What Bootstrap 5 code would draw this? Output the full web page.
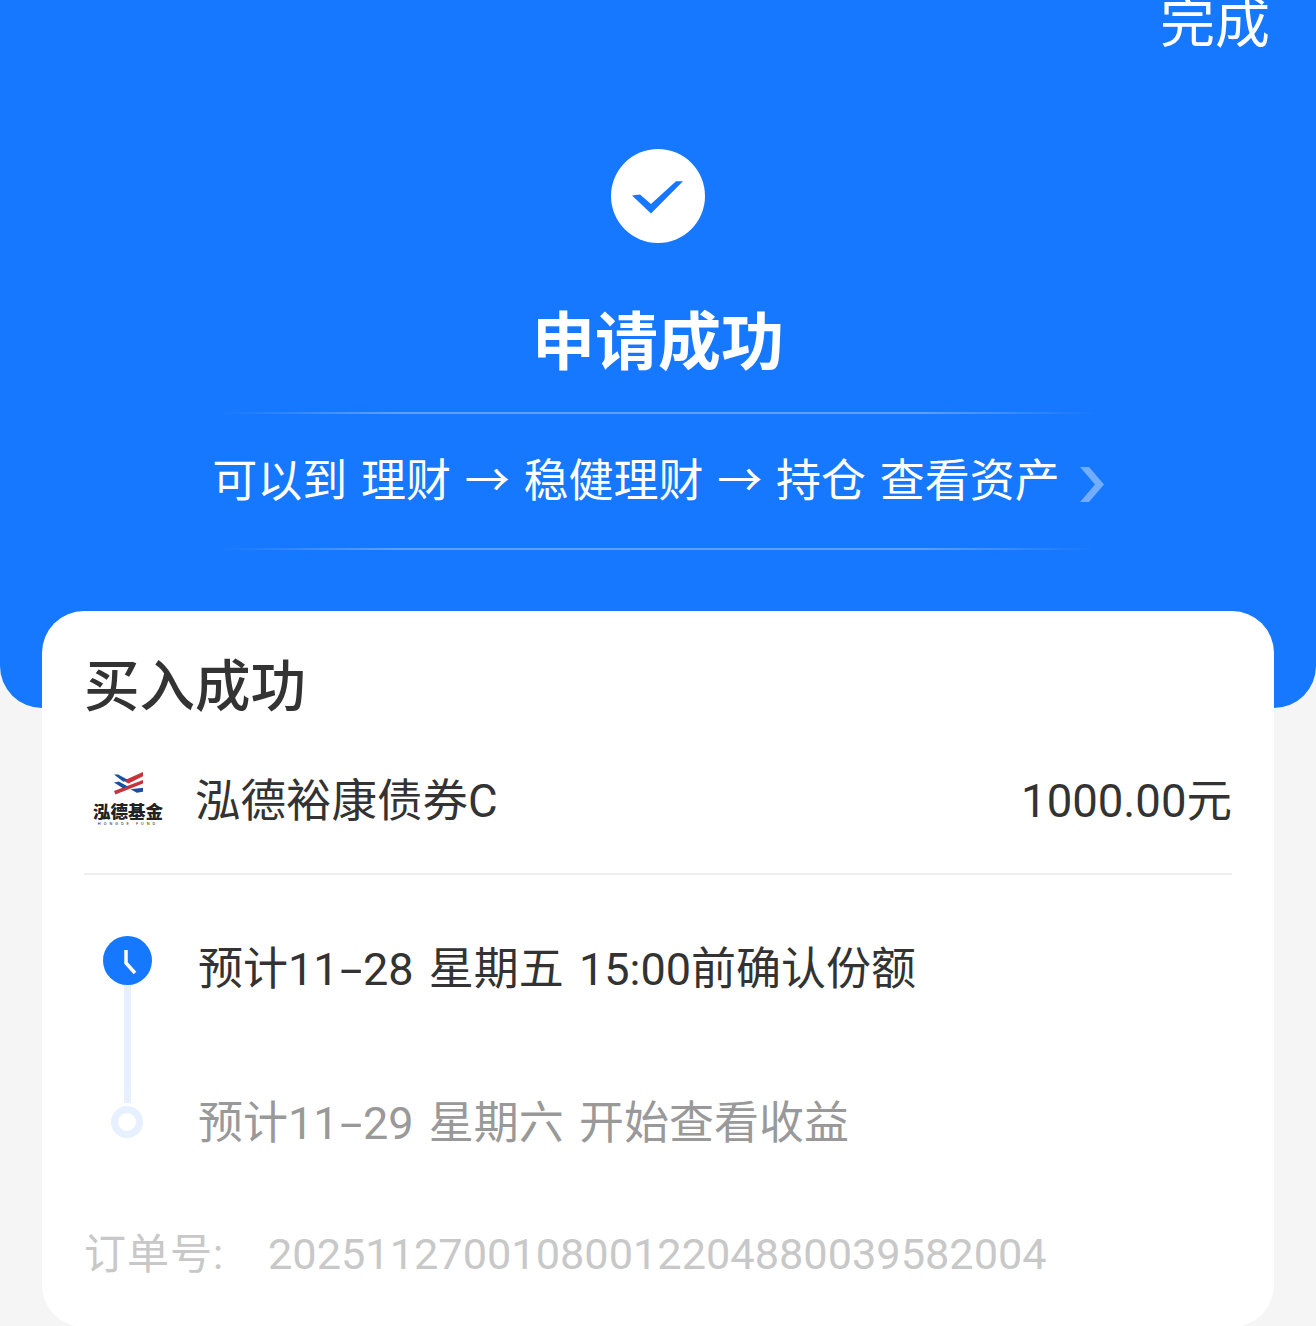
<!DOCTYPE html>
<html lang="zh">
<head>
<meta charset="UTF-8" />
<title>申请成功</title>
<link href="https://cdn.jsdelivr.net/npm/bootstrap@5.3.0/dist/css/bootstrap.min.css" rel="stylesheet" />
<style>
html, body { height: 1326px; overflow: hidden; }
body { background: #f5f5f5; font-family: Roboto, "Noto Sans CJK SC", sans-serif; }
.hero { height: 708px; background: #1677ff; border-radius: 0 0 42px 42px; color: #fff; }
.done-link { font-size: 55px; line-height: 46px; height: 149px; padding-right: 46px; }
.ok-circle { width: 94px; height: 94px; background: #fff; border-radius: 50%; }
.ok-check { margin-top: 2px; }
.hero-title { font-size: 63px; font-weight: 700; line-height: 72px; margin: 64px 0 33px; }
.hero-rule { width: 878px; height: 2px; background: linear-gradient(90deg, rgba(255,255,255,0), rgba(255,255,255,.3) 20%, rgba(255,255,255,.3) 80%, rgba(255,255,255,0)); }
.hero-path { font-size: 45px; line-height: 54px; height: 134px; padding-top: 2px; word-spacing: 2.6px; gap: 20px; }
.path-chevron { margin-top: 6px; }
.sheet { margin: -97px 42px 0; position: relative; height: 716px; background: #fff; border-radius: 42px; padding: 0 42px; }
.sheet-title { font-size: 55.5px; font-weight: 500; line-height: 64px; color: #333; padding-top: 45px; height: 110px; }
.fund-row { height: 154px; padding-top: 11px; border-bottom: 2px solid #eeeeee; }
.fund-name, .fund-amount { font-size: 45.5px; color: #333; }
.fund-logo { width: 72px; margin: -7px 31px 0 8px; }
.logo-icon { margin-bottom: 8px; }
.logo-cn { font-size: 17.5px; font-weight: 900; line-height: 18px; color: #222; white-space: nowrap; }
.logo-en { font-size: 4px; line-height: 5px; letter-spacing: 3px; color: #222; white-space: nowrap; }
.steps { padding-top: 61px; }
.step-row { height: 154px; }
.step-row:last-child { height: 140px; }
.step-mark { width: 86px; margin-right: 28px; position: relative; }
.step-text { font-size: 45px; line-height: 54px; color: #333; padding-top: 7px; word-spacing: 4px; }
.step-text.later { color: #999; }
.wide-dash { display: inline-block; margin: 0 6px; transform: scaleX(1.8); }
.dot-now { width: 49px; height: 49px; border-radius: 50%; background: #1677ff; }
.dot-later { width: 32px; height: 32px; border-radius: 50%; border: 7px solid #e6f0ff; background: #fff; margin-top: 16px; }
.step-line { position: absolute; left: 40px; top: 49px; width: 7px; height: 118px; background: #e6f0ff; }
.order-no { font-size: 43.3px; line-height: 50px; color: #c8c8c8; }
.order-label { display: inline-block; width: 184px; font-size: 42px; letter-spacing: 1px; }
</style>
</head>
<body>
<div class="hero text-center">
  <div class="done-link text-end">完成</div>
  <div class="d-flex justify-content-center">
    <div class="ok-circle d-flex align-items-center justify-content-center">
      <svg class="ok-check" width="52" height="33" viewBox="0 0 52 33"><polygon points="0,14.5 8,13.5 19,23 44,0.3 51,0.3 19,32.5" fill="#1677ff"/></svg>
    </div>
  </div>
  <div class="hero-title">申请成功</div>
  <div class="d-flex justify-content-center"><div class="hero-rule"></div></div>
  <div class="hero-path d-flex align-items-center justify-content-center">
    <span>可以到 理财 → 稳健理财 → 持仓 查看资产</span>
    <svg class="path-chevron" width="24" height="36" viewBox="0 0 24 36"><polygon points="0,0 9,0 24,17.5 9,35 0,35 15,17.5" fill="#fff" fill-opacity=".4"/></svg>
  </div>
  <div class="d-flex justify-content-center"><div class="hero-rule"></div></div>
</div>
<div class="sheet">
  <div class="sheet-title">买入成功</div>
  <div class="fund-row d-flex align-items-center">
    <div class="fund-logo text-center">
      <svg class="logo-icon d-block mx-auto" width="29" height="23" viewBox="0 0 84 66">
        <g fill="#c8323c"><polygon points="84,0 84,12 42,33 27,25"/><polygon points="84,23 84,33 4,65 0,55"/></g>
        <g fill="#1d4fa1"><polygon points="0,7 12,7 40,22 27,28"/><polygon points="0,30 14,27 40,42 26,47"/><polygon points="84,45 84,57 66,60 48,50"/></g>
      </svg>
      <div class="logo-cn">泓德基金</div>
      <div class="logo-en">HONGDE FUND</div>
    </div>
    <div class="fund-name flex-grow-1">泓德裕康债券C</div>
    <div class="fund-amount">1000.00元</div>
  </div>
  <div class="steps">
    <div class="step-row d-flex align-items-start">
      <div class="step-mark d-flex justify-content-center">
        <div class="dot-now d-flex align-items-center justify-content-center">
          <svg width="49" height="49" viewBox="0 0 49 49" fill="none"><path d="M23 14 V27 L32 37" stroke="#fff" stroke-width="3.5"/></svg>
        </div>
        <div class="step-line"></div>
      </div>
      <div class="step-text">预计11<span class="wide-dash">-</span>28 星期五 15:00前确认份额</div>
    </div>
    <div class="step-row d-flex align-items-start">
      <div class="step-mark d-flex justify-content-center"><div class="dot-later"></div></div>
      <div class="step-text later">预计11<span class="wide-dash">-</span>29 星期六 开始查看收益</div>
    </div>
  </div>
  <div class="order-no"><span class="order-label">订单号:</span>20251127001080012204880039582004</div>
</div>
</body>
</html>
